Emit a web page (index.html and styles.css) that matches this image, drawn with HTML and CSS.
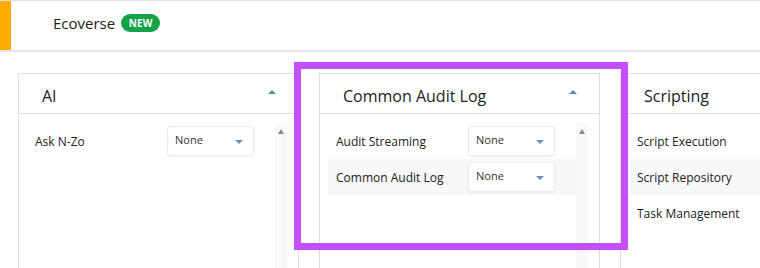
FILE: index.html
```html
<!DOCTYPE html>
<html>
<head>
<meta charset="utf-8">
<link rel="stylesheet" href="styles.css">
</head>
<body>
<div class="topbar">
  <div class="accent"></div>
  <div class="brand">Ecoverse</div>
  <span class="badge">NEW</span>
</div>
<div class="panels">
  <div class="panel">
    <div class="panel-head"><span class="panel-title">AI</span><span class="head-caret"></span></div>
    <div class="panel-body">
      <div class="rows">
        <div class="row"><span class="label">Ask N-Zo</span><div class="select"><span>None</span><span class="sel-caret"></span></div></div>
      </div>
      <div class="scroll"><span class="scroll-up"></span></div>
    </div>
  </div>
  <div class="panel">
    <div class="panel-head"><span class="panel-title">Common Audit Log</span><span class="head-caret"></span></div>
    <div class="panel-body">
      <div class="rows">
        <div class="row"><span class="label">Audit Streaming</span><div class="select"><span>None</span><span class="sel-caret"></span></div></div>
        <div class="row alt"><span class="label">Common Audit Log</span><div class="select"><span>None</span><span class="sel-caret"></span></div></div>
      </div>
      <div class="scroll"><span class="scroll-up"></span></div>
    </div>
  </div>
  <div class="panel">
    <div class="panel-head"><span class="panel-title">Scripting</span><span class="head-caret"></span></div>
    <div class="panel-body">
      <div class="rows">
        <div class="row"><span class="label">Script Execution</span></div>
        <div class="row alt"><span class="label">Script Repository</span></div>
        <div class="row"><span class="label">Task Management</span></div>
      </div>
      <div class="scroll"><span class="scroll-up"></span></div>
    </div>
  </div>
</div>
<div class="highlight"></div>
</body>
</html>
```
FILE: styles.css
```css
html, body {
  margin: 0;
  padding: 0;
  background: #fff;
  font-family: "Open Sans", "Liberation Sans", sans-serif;
  color: #333;
  overflow: hidden;
  width: 760px;
  height: 268px;
  position: relative;
}
.topbar {
  height: 49px;
  border-top: 1px solid #e2e2e2;
  border-bottom: 2px solid #e4e4e4;
  display: flex;
  align-items: center;
}
.accent {
  width: 11px;
  align-self: stretch;
  background: #ffab00;
}
.brand {
  margin-left: 42px;
  font-size: 15px;
  color: #222;
  margin-top: -6px;
}
.badge {
  margin-left: 6px;
  margin-top: -6px;
  background: #15a34a;
  color: #fff;
  font-size: 10px;
  font-weight: 700;
  width: 39px;
  height: 18px;
  line-height: 18px;
  border-radius: 9px;
  text-align: center;
  letter-spacing: 0.2px;
}
.panels {
  display: flex;
  gap: 20px;
  padding: 21px 0 0 18px;
}
.panel {
  flex: 0 0 281px;
  box-sizing: border-box;
  height: 195px;
  border: 1px solid #dedede;
  border-bottom: none;
  display: flex;
  flex-direction: column;
}
.panel-head {
  height: 39px;
  border-bottom: 1px solid #dedede;
  display: flex;
  align-items: center;
  justify-content: space-between;
  padding: 0 22px 0 23px;
}
.panel-title {
  font-size: 16px;
  color: #222;
  margin-top: 5px;
}
.head-caret {
  width: 0;
  height: 0;
  border-left: 4px solid transparent;
  border-right: 4px solid transparent;
  border-bottom: 4px solid #5a87b3;
  margin-top: -3px;
}
.panel-body {
  flex: 1;
  display: flex;
  padding: 9px 11px 0 8px;
}
.rows {
  flex: 1;
}
.row {
  height: 36px;
  display: flex;
  align-items: center;
  padding-left: 8px;
}
.row.alt {
  background: #f8f8f8;
}
.label {
  width: 132px;
  flex-shrink: 0;
  font-size: 12px;
  color: #222;
}
.select {
  width: 87px;
  height: 30px;
  box-sizing: border-box;
  background: #fff;
  border: 1px solid #ececec;
  border-radius: 3px;
  box-shadow: 0 1px 2px rgba(0,0,0,0.06);
  display: flex;
  justify-content: space-between;
  align-items: center;
  padding: 0 10px 0 7px;
  font-size: 11px;
  color: #333;
}
.select span:first-child {
  margin-top: -4px;
}
.sel-caret {
  width: 0;
  height: 0;
  border-left: 4px solid transparent;
  border-right: 4px solid transparent;
  border-top: 4px solid #6b8fba;
  margin-top: 2px;
}
.scroll {
  width: 12px;
  background: #f9f9f9;
  display: flex;
  justify-content: center;
  padding-top: 6px;
}
.scroll-up {
  width: 0;
  height: 0;
  border-left: 3.5px solid transparent;
  border-right: 3.5px solid transparent;
  border-bottom: 5px solid #8a8a8a;
}
.highlight {
  position: absolute;
  left: 294px;
  top: 62px;
  width: 320px;
  height: 174px;
  border: 7px solid #c44ffc;
}
```
